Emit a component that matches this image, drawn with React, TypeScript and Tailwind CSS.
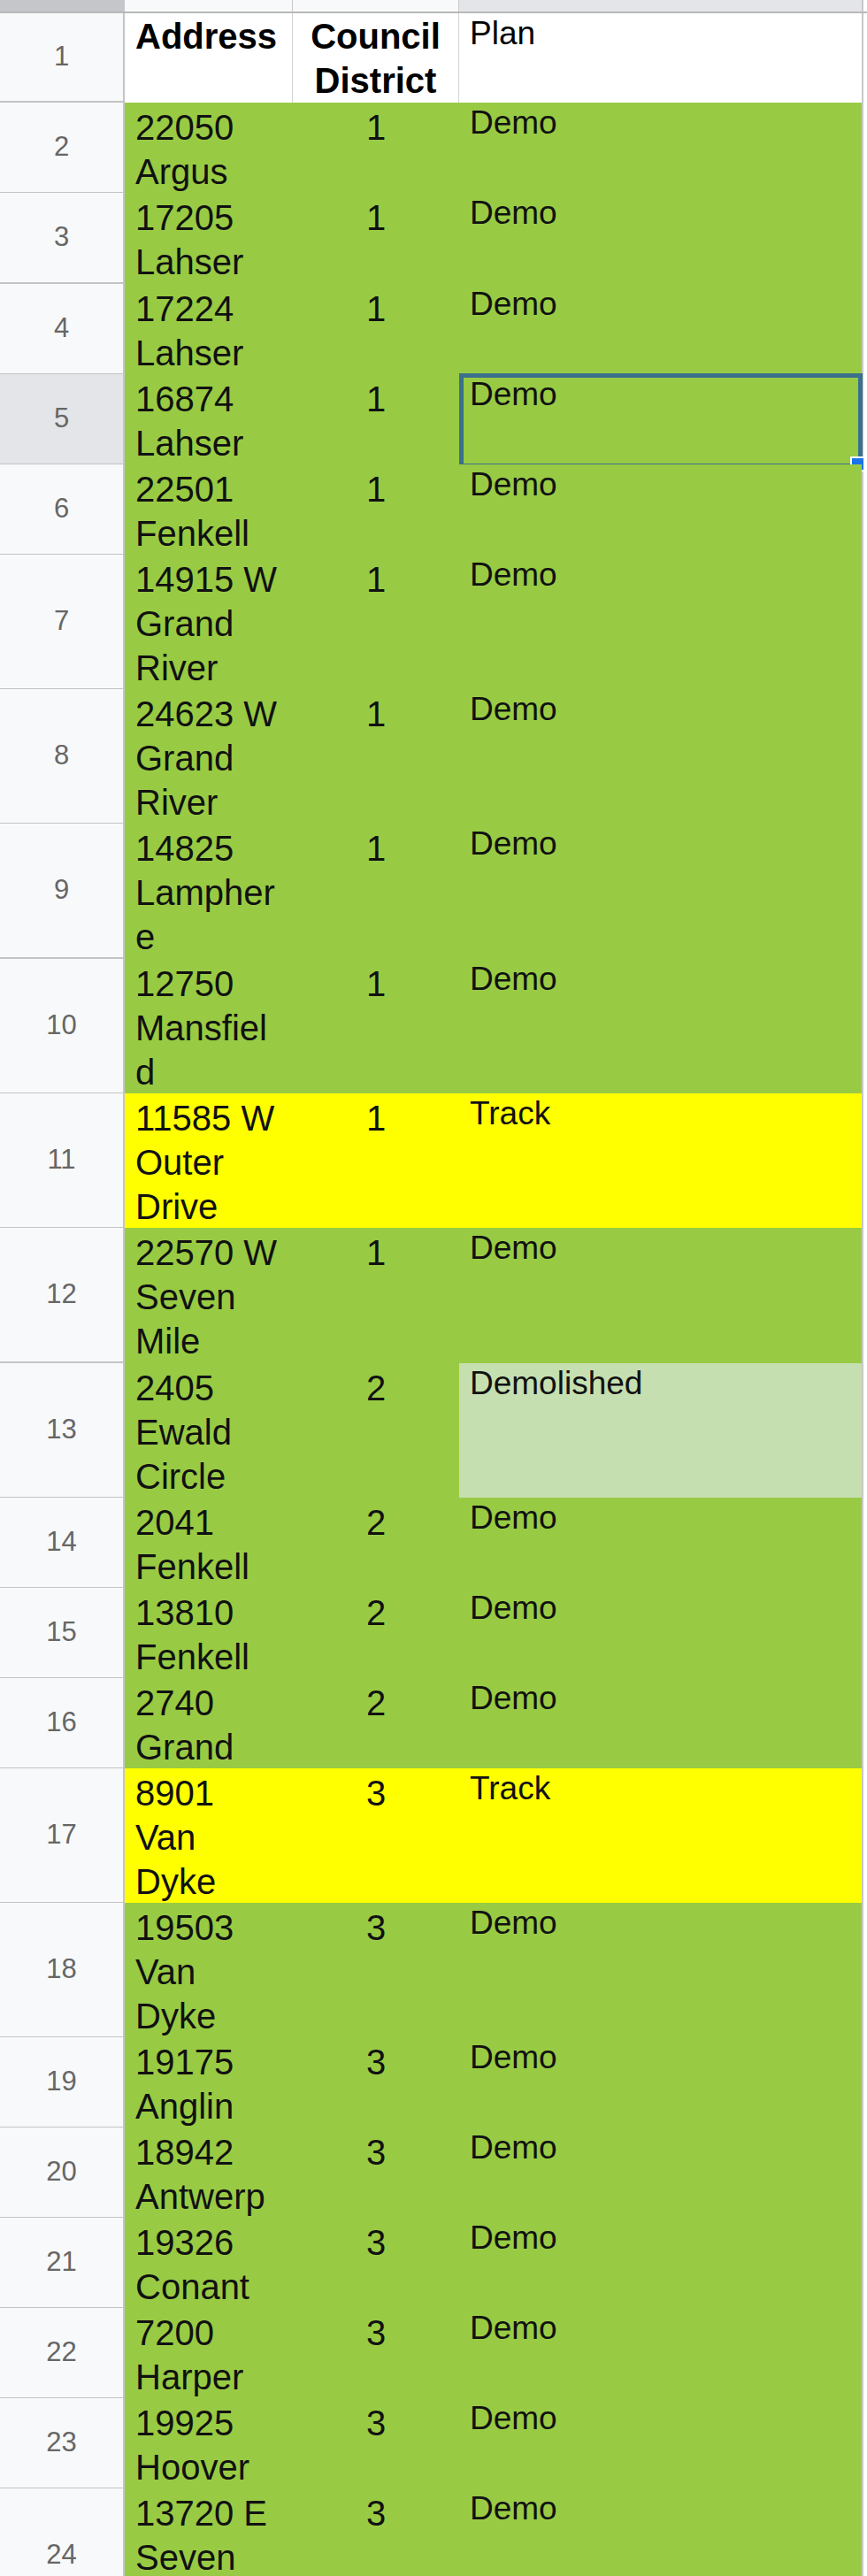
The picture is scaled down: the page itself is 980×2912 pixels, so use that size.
import React from "react";

type Row = {
  n: number;
  addr: string[];
  district: string;
  plan: string;
  fill: "green" | "yellow";
  planFill?: string;
  selected?: boolean;
  tall?: boolean; // row is one pixel taller in the sheet
};

const rows: Row[] = [
  { n: 2, addr: ["22050", "Argus"], district: "1", plan: "Demo", fill: "green" },
  { n: 3, addr: ["17205", "Lahser"], district: "1", plan: "Demo", fill: "green", tall: true },
  { n: 4, addr: ["17224", "Lahser"], district: "1", plan: "Demo", fill: "green" },
  { n: 5, addr: ["16874", "Lahser"], district: "1", plan: "Demo", fill: "green", selected: true },
  { n: 6, addr: ["22501", "Fenkell"], district: "1", plan: "Demo", fill: "green" },
  { n: 7, addr: ["14915 W", "Grand", "River"], district: "1", plan: "Demo", fill: "green" },
  { n: 8, addr: ["24623 W", "Grand", "River"], district: "1", plan: "Demo", fill: "green" },
  { n: 9, addr: ["14825", "Lampher", "e"], district: "1", plan: "Demo", fill: "green", tall: true },
  { n: 10, addr: ["12750", "Mansfiel", "d"], district: "1", plan: "Demo", fill: "green" },
  { n: 11, addr: ["11585 W", "Outer", "Drive"], district: "1", plan: "Track", fill: "yellow" },
  { n: 12, addr: ["22570 W", "Seven", "Mile"], district: "1", plan: "Demo", fill: "green", tall: true },
  { n: 13, addr: ["2405", "Ewald", "Circle"], district: "2", plan: "Demolished", fill: "green", planFill: "bg-[#c6dfb0]" },
  { n: 14, addr: ["2041", "Fenkell"], district: "2", plan: "Demo", fill: "green" },
  { n: 15, addr: ["13810", "Fenkell"], district: "2", plan: "Demo", fill: "green" },
  { n: 16, addr: ["2740", "Grand"], district: "2", plan: "Demo", fill: "green" },
  { n: 17, addr: ["8901", "Van", "Dyke"], district: "3", plan: "Track", fill: "yellow" },
  { n: 18, addr: ["19503", "Van", "Dyke"], district: "3", plan: "Demo", fill: "green" },
  { n: 19, addr: ["19175", "Anglin"], district: "3", plan: "Demo", fill: "green" },
  { n: 20, addr: ["18942", "Antwerp"], district: "3", plan: "Demo", fill: "green" },
  { n: 21, addr: ["19326", "Conant"], district: "3", plan: "Demo", fill: "green" },
  { n: 22, addr: ["7200", "Harper"], district: "3", plan: "Demo", fill: "green" },
  { n: 23, addr: ["19925", "Hoover"], district: "3", plan: "Demo", fill: "green" },
  { n: 24, addr: ["13720 E", "Seven", "Mile"], district: "3", plan: "Demo", fill: "green" },
];

const cols = "grid grid-cols-[141px_190px_188px_455px_6px]";

function rowHeight(row: Row) {
  if (row.addr.length === 3) return row.tall ? "h-[153px]" : "h-[152px]";
  return row.tall ? "h-[103px]" : "h-[102px]";
}

function DataRow({ row }: { row: Row }) {
  const bg = row.fill === "yellow" ? "bg-[#ffff00]" : "bg-[#98cb43]";
  return (
    <div className={`${cols} ${rowHeight(row)}`}>
      <div
        className={`flex items-center justify-center border-r-2 border-b-2 border-[#c4c4c4] text-[31px] text-[#666] ${
          row.selected ? "bg-[#e3e5e8]" : "bg-[#f8f9fa]"
        }`}
      >
        {row.n}
      </div>
      <div className={`${bg} pl-[12px] pt-[3px] text-[40px] leading-[50px] text-[#111]`}>
        {row.addr.map((line, i) => (
          <div key={i}>{line}</div>
        ))}
      </div>
      <div className={`${bg} pt-[3px] text-center text-[40px] leading-[50px] text-[#111]`}>
        {row.district}
      </div>
      <div className={`relative ${row.planFill ?? bg} pl-[12px] text-[37px] leading-[46px] text-[#111]`}>
        {row.plan}
        {row.selected && (
          <>
            <div className="absolute -top-px left-0 -right-px -bottom-[3px] border-[5px] border-[#3b6f8c]" />
            <div className="absolute -right-[4px] -bottom-[7px] h-[17px] w-[17px] border-2 border-white bg-[#1a73e8]" />
          </>
        )}
      </div>
      <div className="border-l-2 border-[#c8c8c8] bg-white" />
    </div>
  );
}

export default function App() {
  return (
    <div className="h-[2912px] w-[980px] overflow-hidden bg-white font-['Liberation_Sans',Arial,sans-serif]">
      {/* column header strip */}
      <div className={`${cols} h-[15px] border-b-2 border-[#b8b8b8]`}>
        <div className="bg-[#c4c6c9]" />
        <div className="border-r border-[#c8c8c8] bg-[#f8f9fa]" />
        <div className="border-r border-[#c8c8c8] bg-[#f8f9fa]" />
        <div className="bg-[#e3e5e8]" />
        <div className="border-l-2 border-[#c8c8c8] bg-white" />
      </div>

      {/* header row */}
      <div className={`${cols} h-[101px]`}>
        <div className="flex items-center justify-center border-r-2 border-b-2 border-[#c4c4c4] bg-[#f8f9fa] text-[31px] text-[#666]">
          1
        </div>
        <div className="border-r border-[#d4d4d4] bg-white pl-[12px] pt-px text-[40px] font-bold leading-[50px] text-black">
          Address
        </div>
        <div className="border-r border-[#d4d4d4] bg-white pt-px text-center text-[40px] font-bold leading-[50px] text-black">
          <div>Council</div>
          <div>District</div>
        </div>
        <div className="bg-white pl-[12px] text-[37px] leading-[46px] text-black">Plan</div>
        <div className="border-l-2 border-[#c8c8c8] bg-white" />
      </div>

      {rows.map((row) => (
        <DataRow key={row.n} row={row} />
      ))}
    </div>
  );
}
